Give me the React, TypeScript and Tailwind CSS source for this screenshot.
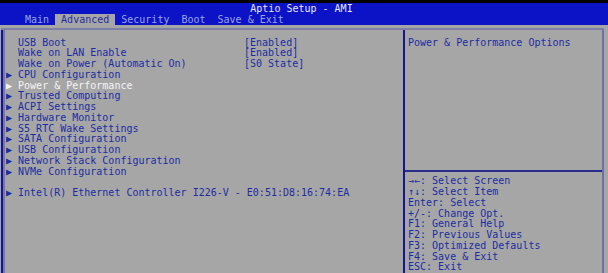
const tabs = ['Main', 'Advanced', 'Security', 'Boot', 'Save & Exit'];

type Row = { label?: string; value?: string; sub?: boolean; active?: boolean };

const rows: Row[] = [
  { label: 'USB Boot', value: '[Enabled]' },
  { label: 'Wake on LAN Enable', value: '[Enabled]' },
  { label: 'Wake on Power (Automatic On)', value: '[S0 State]' },
  { label: 'CPU Configuration', sub: true },
  { label: 'Power & Performance', sub: true, active: true },
  { label: 'Trusted Computing', sub: true },
  { label: 'ACPI Settings', sub: true },
  { label: 'Hardware Monitor', sub: true },
  { label: 'S5 RTC Wake Settings', sub: true },
  { label: 'SATA Configuration', sub: true },
  { label: 'USB Configuration', sub: true },
  { label: 'Network Stack Configuration', sub: true },
  { label: 'NVMe Configuration', sub: true },
  {},
  { label: 'Intel(R) Ethernet Controller I226-V - E0:51:D8:16:74:EA', sub: true },
];

const help = [
  '→←: Select Screen',
  '↑↓: Select Item',
  'Enter: Select',
  '+/-: Change Opt.',
  'F1: General Help',
  'F2: Previous Values',
  'F3: Optimized Defaults',
  'F4: Save & Exit',
  'ESC: Exit',
];

export default function App() {
  return (
    <div className="w-[608px] h-[273px] overflow-hidden bg-[#a6a6a6] font-['DejaVu_Sans_Mono',monospace] text-[10px] leading-[10.75px] text-[#1e2ca0] whitespace-pre">
      <header className="h-[25px] bg-[#0c12c6] border-t-[3px] border-black">
        <div className="h-[11px] leading-[11px] text-center pr-[5px] text-[#e4e6f2]">Aptio Setup - AMI</div>
        <nav className="flex h-[11px] leading-[11px] pl-[19px]">
          {tabs.map((t) => (
            <span
              key={t}
              className={
                t === 'Advanced'
                  ? 'px-[6px] bg-[#a6a6a6] text-[#1e2ca0]'
                  : 'px-[6px] text-[#9aa6e4]'
              }
            >
              {t}
            </span>
          ))}
        </nav>
      </header>

      <div className="flex mt-[3px] ml-[1px] mr-[4px] h-[245px] border-t-2 border-[#7e80a6]">
        <section className="w-[402px] border-l-2 border-[#14168a] shadow-[inset_2px_0_0_#7276b6] pt-[7.5px] pl-[3px]">
          {rows.map((r, i) => (
            <div key={i} className={`flex h-[10.75px] ${r.active ? 'text-[#f4f4f6]' : ''}`}>
              <span className="w-[238px] shrink-0 overflow-visible">
                {r.sub ? '▶ ' : '  '}
                {r.label ?? ''}
              </span>
              {r.value && <span>{r.value}</span>}
            </div>
          ))}
        </section>

        <aside className="flex-1 flex flex-col border-l-2 border-r-2 border-l-[#14168a] border-r-[#6e70a8]">
          <div className="h-[142px] pt-[7.5px] pl-[3px] border-b-2 border-[#2a2c8c]">Power & Performance Options</div>
          <div className="pt-[4.5px] pl-[3px]">
            {help.map((h) => (
              <div key={h} className="h-[10.75px]">{h}</div>
            ))}
          </div>
        </aside>
      </div>
    </div>
  );
}
